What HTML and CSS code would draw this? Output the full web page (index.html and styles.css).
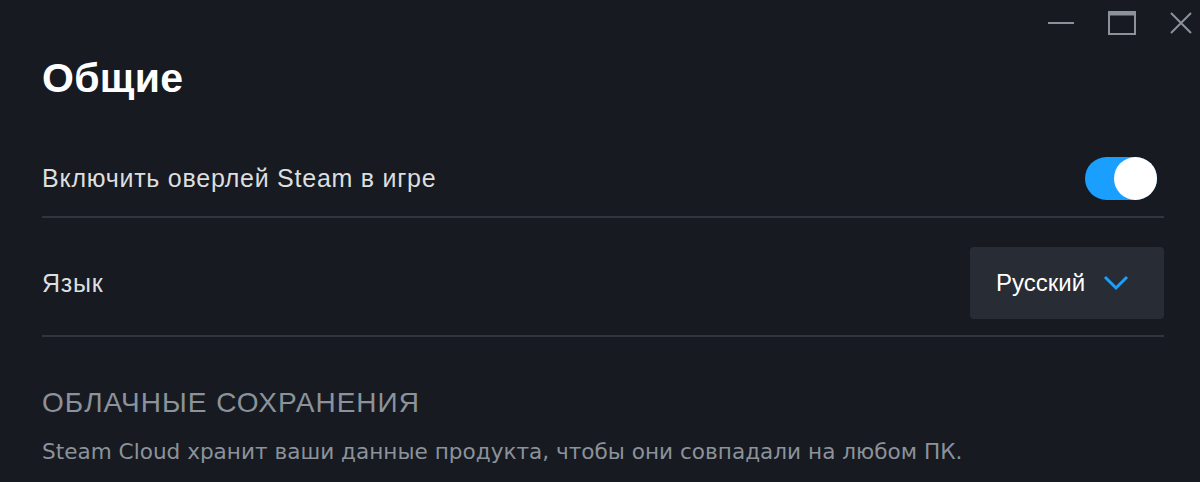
FILE: index.html
```html
<!DOCTYPE html>
<html lang="ru">
<head>
    <meta charset="UTF-8">
    <meta name="viewport" content="width=device-width, initial-scale=1.0">
    <title>Общие</title>
    <link rel="stylesheet" href="styles.css">
</head>
<body>
    <div class="titlebar">
        <button class="win-btn" aria-label="Свернуть">
            <svg width="26" height="24" viewBox="0 0 26 24"><path d="M0 12H26" stroke="currentColor" stroke-width="2"/></svg>
        </button>
        <button class="win-btn" aria-label="Развернуть">
            <svg width="28" height="24" viewBox="0 0 28 24"><rect x="1" y="1" width="26" height="22" fill="none" stroke="currentColor" stroke-width="2"/><path d="M1 3H27" stroke="currentColor" stroke-width="3"/></svg>
        </button>
        <button class="win-btn" aria-label="Закрыть">
            <svg width="22" height="22" viewBox="0 0 22 22"><path d="M1 1L21 21M21 1L1 21" stroke="currentColor" stroke-width="2"/></svg>
        </button>
    </div>

    <main class="page">
        <h1 class="page-title">Общие</h1>

        <div class="setting-row first">
            <span class="setting-label">Включить оверлей Steam в игре</span>
            <div class="toggle on"><span class="knob"></span></div>
        </div>

        <div class="setting-row second">
            <span class="setting-label">Язык</span>
            <div class="dropdown">
                <span>Русский</span>
                <svg width="26" height="16" viewBox="0 0 26 16"><path d="M2 2L13 13L24 2" fill="none" stroke="#1a9fff" stroke-width="3"/></svg>
            </div>
        </div>

        <section class="cloud">
            <h2 class="section-title">Облачные сохранения</h2>
            <p class="section-text">Steam Cloud хранит ваши данные продукта, чтобы они совпадали на любом ПК.</p>
        </section>
    </main>
</body>
</html>
```

FILE: styles.css
```css
body {
    margin: 0;
    background: #171a21;
    color: #dcdedf;
    font-family: "Liberation Sans", Arial, sans-serif;
    overflow: hidden;
}
.titlebar {
    display: flex;
    justify-content: flex-end;
    align-items: center;
    gap: 34px;
    height: 46px;
    padding-right: 8px;
}
.win-btn {
    display: flex;
    align-items: center;
    padding: 0;
    border: none;
    background: none;
    color: #8b929a;
    cursor: pointer;
}
.page {
    padding: 0 36px 0 42px;
}
.page-title {
    margin: 8px 0 0;
    font-size: 41px;
    line-height: 48px;
    font-weight: bold;
    letter-spacing: 0.3px;
    color: #fff;
}
.setting-row {
    display: flex;
    justify-content: space-between;
    align-items: center;
    border-bottom: 2px solid #30353f;
}
.setting-row.first {
    height: 76px;
    padding-top: 38px;
}
.setting-row.second {
    height: 104px;
    padding-top: 13px;
}
.setting-label {
    font-size: 25px;
    letter-spacing: 0.75px;
}
.toggle {
    position: relative;
    width: 72px;
    height: 43px;
    margin-right: 7px;
    border-radius: 22px;
    background: #3d4450;
}
.toggle.on {
    background: #1a9fff;
}
.toggle .knob {
    position: absolute;
    top: 0;
    right: 0;
    width: 43px;
    height: 43px;
    border-radius: 50%;
    background: #fff;
}
.dropdown {
    display: flex;
    align-items: center;
    gap: 18px;
    box-sizing: border-box;
    width: 194px;
    height: 72px;
    padding-left: 26px;
    border-radius: 4px;
    background: #282c35;
    color: #fff;
    font-size: 24px;
}
.cloud {
    padding-top: 46px;
}
.section-title {
    margin: 0;
    font-size: 28px;
    line-height: 40px;
    font-weight: normal;
    letter-spacing: 1px;
    text-transform: uppercase;
    color: #8b929a;
}
.section-text {
    margin: 16px 0 0;
    font-family: "DejaVu Sans", sans-serif;
    font-size: 21.6px;
    color: #8b929a;
}
```
